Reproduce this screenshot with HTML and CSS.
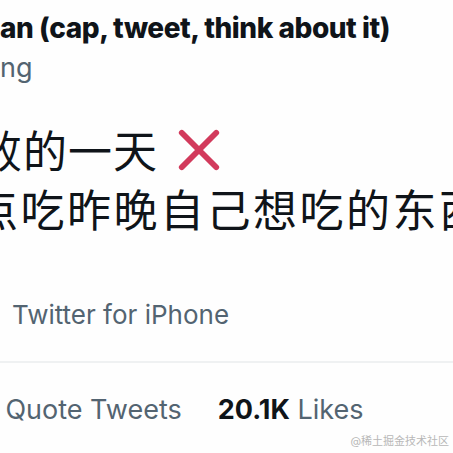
FILE: index.html
```html
<!DOCTYPE html>
<html>
<head>
  <title>Tweet</title>
  <link rel="stylesheet" href="styles.css">
</head>
<body>
  <div class="tweet">
    <div class="author">
      <div class="name">an (cap, tweet, think about it)</div>
      <div class="handle">ng</div>
    </div>

    <div class="text">
      <div class="line first">败的一天
        <svg class="cross" viewBox="0 0 48 48" width="48" height="48">
          <path d="M6 6 L42 42 M42 6 L6 42" stroke="#d23a5c" stroke-width="6" stroke-linecap="round" fill="none"/>
        </svg>
      </div>
      <div class="line second">点吃昨晚自己想吃的东西</div>
    </div>

    <div class="meta">Twitter for iPhone</div>

    <div class="stats">
      <span class="stat"><span class="dot">·</span> Quote Tweets</span>
      <span class="stat"><b>20.1K</b> Likes</span>
    </div>
  </div>

  <div class="mark">@稀土掘金技术社区</div>
</body>
</html>
```

FILE: styles.css
```css
body {
  margin: 0;
  width: 453px;
  height: 453px;
  overflow: hidden;
  background: #fefefe;
  font-family: Inter, "Noto Sans CJK SC", sans-serif;
  color: #0f1419;
}
.tweet { padding-top: 14px; }

.author { line-height: 1; }
.name {
  font-size: 28px;
  font-weight: 800;
  letter-spacing: -0.45px;
  height: 40px;
}
.handle {
  font-size: 27px;
  color: #536471;
}

.text {
  margin-top: 39px;
  font-family: "Noto Sans CJK SC", sans-serif;
  font-size: 44px;
  line-height: 59px;
  letter-spacing: 1px;
  white-space: nowrap;
}
.line { display: flex; align-items: center; gap: 18px; }
.line.first { margin-left: -22px; }
.line.second { margin-left: -26px; letter-spacing: 2.5px; }
.cross { width: 46px; height: 46px; }

.meta {
  margin-top: 61px;
  padding-left: 12px;
  font-size: 26px;
  color: #536471;
  padding-bottom: 31px;
  border-bottom: 2px solid #eff1f2;
}

.stats {
  margin-top: 30px;
  display: flex;
  gap: 36px;
  font-size: 27px;
  color: #536471;
}
.stats b { color: #0f1419; font-weight: 700; }
.dot { margin-left: -10px; }

.mark {
  position: absolute;
  right: 4px;
  bottom: 5px;
  font-size: 11px;
  color: #b8b8b8;
}
```
